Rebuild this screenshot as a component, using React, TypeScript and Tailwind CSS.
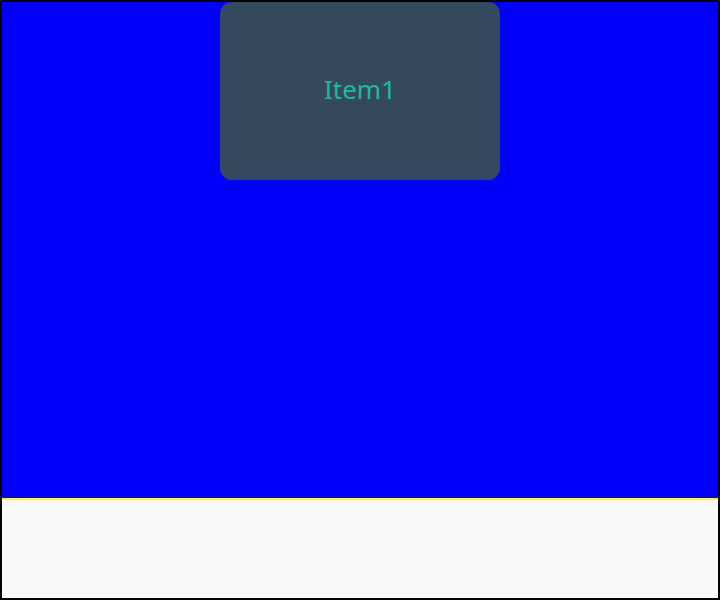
import React from 'react';

const App: React.FC = () => {
    return (
        <div className="w-[720px] h-[600px] border-2 border-black flex flex-col" style={{ fontFamily: '"Noto Sans", sans-serif' }}>
            <div className="flex-1 bg-[#0000ff] flex justify-center items-start">
                <div className="w-[280px] h-[178px] bg-[#34495e] rounded-[12px] flex items-center justify-center pb-[4px]">
                    <span className="text-[26px] text-[#1abc9c]">Item1</span>
                </div>
            </div>
            <div className="h-[100px] border-t-2 border-[#ffff00] bg-[#fafafa]"></div>
        </div>
    );
};

export default App;
